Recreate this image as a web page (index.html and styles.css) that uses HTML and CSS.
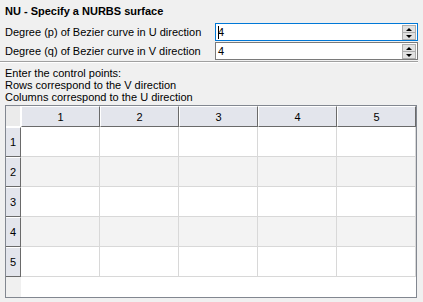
FILE: index.html
```html
<!DOCTYPE html>
<html>
<head>
<meta charset="utf-8">
<link rel="stylesheet" href="styles.css">
</head>
<body>
<div class="panel">
  <div class="title">NU - Specify a NURBS surface</div>
  <div class="form">
    <label class="lbl">Degree (p) of Bezier curve in U direction</label>
    <div class="spin focused"><span class="caret"></span><span class="val">4</span>
      <div class="btns"><span class="btn up"></span><span class="btn down"></span></div>
    </div>
    <label class="lbl">Degree (q) of Bezier curve in V direction</label>
    <div class="spin"><span class="val">4</span>
      <div class="btns"><span class="btn up"></span><span class="btn down"></span></div>
    </div>
  </div>
  <div class="sep"></div>
  <div class="notes">
    <div>Enter the control points:</div>
    <div>Rows correspond to the V direction</div>
    <div>Columns correspond to the U direction</div>
  </div>
  <div class="table">
    <div class="corner"></div>
    <div class="ch">1</div><div class="ch">2</div><div class="ch">3</div><div class="ch">4</div><div class="ch">5</div>
    <div class="rh">1</div><div class="c"></div><div class="c"></div><div class="c"></div><div class="c"></div><div class="c"></div>
    <div class="rh">2</div><div class="c alt"></div><div class="c alt"></div><div class="c alt"></div><div class="c alt"></div><div class="c alt"></div>
    <div class="rh">3</div><div class="c"></div><div class="c"></div><div class="c"></div><div class="c"></div><div class="c"></div>
    <div class="rh">4</div><div class="c alt"></div><div class="c alt"></div><div class="c alt"></div><div class="c alt"></div><div class="c alt"></div>
    <div class="rh">5</div><div class="c"></div><div class="c"></div><div class="c"></div><div class="c"></div><div class="c"></div>
    <div class="fill-left"></div><div class="fill-right"></div>
  </div>
</div>
</body>
</html>
```
FILE: styles.css
```css
html, body {
  margin: 0;
  padding: 0;
  background: #f0f0f0;
}
body {
  width: 423px;
  height: 302px;
  overflow: hidden;
  font-family: "Liberation Sans", Arial, sans-serif;
  font-size: 11px;
  color: #000;
}
.panel {
  padding: 4px 5px 0 5px;
}
.title {
  font-weight: bold;
  line-height: 14px;
  height: 14px;
  margin-bottom: 5px;
}
.form {
  display: grid;
  grid-template-columns: 210px 203px;
  row-gap: 1px;
  align-items: center;
}
.lbl {
  line-height: 14px;
}
.spin {
  position: relative;
  height: 18px;
  box-sizing: border-box;
  border: 1px solid #7a7a7a;
  background: #fff;
  display: flex;
  align-items: center;
  padding-left: 2px;
}
.spin.focused {
  border-color: #0078d7;
}
.val {
  line-height: 14px;
}
.caret {
  position: absolute;
  left: 2px;
  top: 2px;
  width: 1px;
  height: 13px;
  background: #000;
}
.btns {
  position: absolute;
  right: 1px;
  top: 1px;
  width: 14px;
  height: 15px;
  display: flex;
  flex-direction: column;
}
.btn {
  flex: 1;
  box-sizing: border-box;
  border: 1px solid #adadad;
  background: #e1e1e1;
  display: flex;
  align-items: center;
  justify-content: center;
}
.btn.down {
  border-top: none;
}
.btn.up::before {
  content: "";
  border-left: 3px solid transparent;
  border-right: 3px solid transparent;
  border-bottom: 3px solid #000;
}
.btn.down::before {
  content: "";
  border-left: 3px solid transparent;
  border-right: 3px solid transparent;
  border-top: 3px solid #000;
}
.sep {
  margin: 1px -5px 0 -5px;
  width: 418px;
  height: 0;
  border-top: 1px solid #a0a0a0;
  border-bottom: 1px solid #ffffff;
}
.notes {
  margin-top: 4px;
  line-height: 12px;
}
.table {
  margin-top: 2px;
  width: 412px;
  height: 193px;
  box-sizing: border-box;
  border: 1px solid #828790;
  background: #fff;
  display: grid;
  grid-template-columns: 15px repeat(5, 1fr);
  grid-template-rows: 21px repeat(5, 30px) 1fr;
}
.corner {
  background: #ebebeb;
  border-right: 1px solid #ffffff;
  border-bottom: 1px solid #ffffff;
  box-sizing: border-box;
}
.ch, .rh {
  box-sizing: border-box;
  background: #e3e5ec;
  border-left: 1px solid #ffffff;
  border-top: 1px solid #ffffff;
  border-right: 1px solid #6a6a6a;
  border-bottom: 1px solid #6a6a6a;
  display: flex;
  align-items: center;
  justify-content: center;
}
.rh {
  border-left: none;
}
.c {
  box-sizing: border-box;
  border-right: 1px solid #d8d8d8;
  border-bottom: 1px solid #d8d8d8;
  background: #ffffff;
}
.c.alt {
  background: #f3f3f3;
}
.fill-left {
  background: #f0f0f0;
}
.fill-right {
  grid-column: 2 / span 5;
  background: #ffffff;
}
```
